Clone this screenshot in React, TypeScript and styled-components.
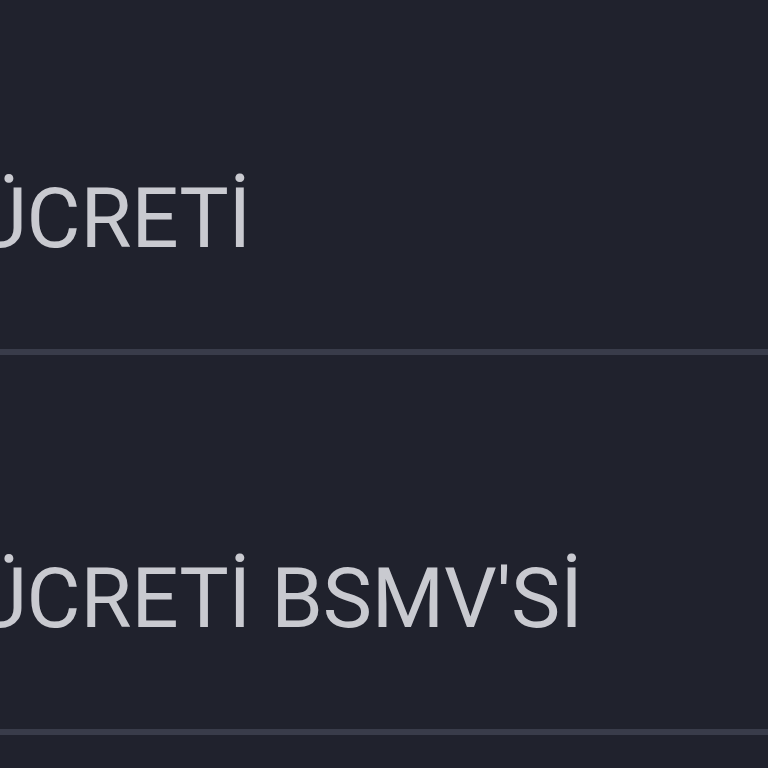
import React from "react";
import styled, { createGlobalStyle } from "styled-components";

const GlobalStyle = createGlobalStyle`
  html, body {
    margin: 0;
    padding: 0;
    background: #20222d;
  }
  body {
    font-family: Roboto, "Noto Sans", "Liberation Sans", sans-serif;
    overflow: hidden;
  }
`;

const Screen = styled.div`
  width: 768px;
  height: 768px;
  overflow: hidden;
  background: #20222d;
`;

// list is scrolled a little past its top edge
const FeeList = styled.div`
  display: flex;
  flex-direction: column;
  margin-top: -25px;
`;

const FeeRow = styled.div`
  box-sizing: border-box;
  height: 380px;
  padding-top: 202px;
  border-bottom: 6px solid #393c4a;
  overflow: hidden;
`;

const FeeLabel = styled.span`
  display: block;
  margin-left: -27px;
  font-size: 83px;
  line-height: 1;
  font-weight: 400;
  letter-spacing: -0.2px;
  color: #c9cad0;
  white-space: nowrap;
`;

const fees = ["ÜCRETİ", "ÜCRETİ BSMV'Sİ"];

export default function App() {
  return (
    <>
      <GlobalStyle />
      <Screen>
        <FeeList>
          {fees.map((label) => (
            <FeeRow key={label}>
              <FeeLabel>{label}</FeeLabel>
            </FeeRow>
          ))}
        </FeeList>
      </Screen>
    </>
  );
}
